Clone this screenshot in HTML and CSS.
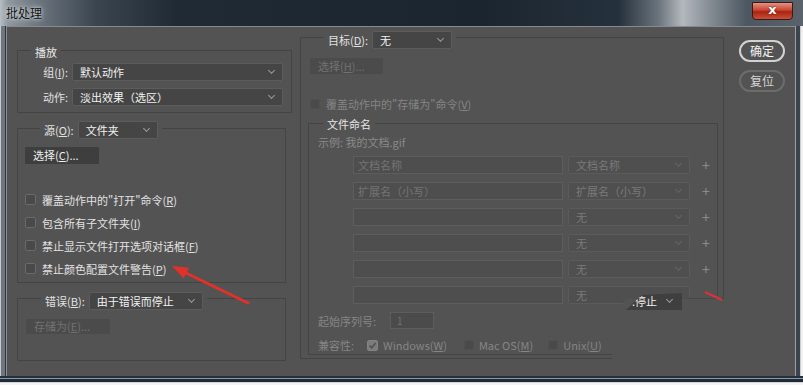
FILE: index.html
```html
<!DOCTYPE html>
<html lang="zh-CN">

<head>
  <meta charset="UTF-8">
  <title>批处理</title>
  <link rel="stylesheet" href="styles.css">
</head>

<body>
  <div class="window">
    <div class="titlebar">
      <div class="title">批处理</div>
      <div class="close">x</div>
    </div>

    <div class="body-row">
      <div class="frame-l"></div>

      <div class="client">
        <!-- 左侧：播放 / 源 / 错误 -->
        <div class="col-left">
          <div class="group play">
            <div class="group-head">播放</div>
            <div class="field-row">
              <label>组(<u>I</u>):</label>
              <div class="select wide"><span>默认动作</span><i class="chev"></i></div>
            </div>
            <div class="field-row">
              <label>动作:</label>
              <div class="select wide"><span>淡出效果（选区）</span><i class="chev"></i></div>
            </div>
          </div>

          <div class="group source">
            <div class="group-head">
              <label>源(<u>O</u>):</label>
              <div class="select short"><span>文件夹</span><i class="chev"></i></div>
            </div>
            <div class="btn-flat choose">选择(<u>C</u>)...</div>
            <div class="check-list">
              <div class="check-row"><span class="box"></span>覆盖动作中的"打开"命令(<u>R</u>)</div>
              <div class="check-row"><span class="box"></span>包含所有子文件夹(<u>I</u>)</div>
              <div class="check-row"><span class="box"></span>禁止显示文件打开选项对话框(<u>F</u>)</div>
              <div class="check-row"><span class="box"></span>禁止颜色配置文件警告(<u>P</u>)</div>
            </div>
          </div>

          <div class="group error">
            <div class="group-head">
              <label>错误(<u>B</u>):</label>
              <div class="select err-select"><span>由于错误而停止</span><i class="chev"></i></div>
            </div>
            <div class="btn-flat disabled save-as">存储为(<u>E</u>)...</div>
          </div>
        </div>

        <!-- 右侧：目标 -->
        <div class="col-right">
          <div class="group target">
            <div class="group-head">
              <label>目标(<u>D</u>):</label>
              <div class="select short"><span>无</span><i class="chev"></i></div>
            </div>
            <div class="btn-flat disabled choose-h">选择(<u>H</u>)...</div>
            <div class="check-row dim override"><span class="box off"></span>覆盖动作中的"存储为"命令(<u>V</u>)</div>

            <div class="group naming">
              <div class="group-head">文件命名</div>
              <div class="example">示例: 我的文档.gif</div>
              <div class="name-rows">
                <div class="name-row">
                  <div class="input"><span>文档名称</span></div>
                  <div class="select off name-select"><span>文档名称</span><i class="chev"></i></div>
                  <span class="plus">+</span>
                </div>
                <div class="name-row">
                  <div class="input"><span>扩展名（小写）</span></div>
                  <div class="select off name-select"><span>扩展名（小写）</span><i class="chev"></i></div>
                  <span class="plus">+</span>
                </div>
                <div class="name-row">
                  <div class="input"></div>
                  <div class="select off name-select"><span>无</span><i class="chev"></i></div>
                  <span class="plus">+</span>
                </div>
                <div class="name-row">
                  <div class="input"></div>
                  <div class="select off name-select"><span>无</span><i class="chev"></i></div>
                  <span class="plus">+</span>
                </div>
                <div class="name-row">
                  <div class="input"></div>
                  <div class="select off name-select"><span>无</span><i class="chev"></i></div>
                  <span class="plus">+</span>
                </div>
                <div class="name-row">
                  <div class="input"></div>
                  <div class="select off name-select"><span>无</span><i class="chev"></i></div>
                  <span class="plus"></span>
                </div>
              </div>

              <div class="serial-row dim">
                <label>起始序列号:</label>
                <div class="input serial"><span>1</span></div>
              </div>

              <div class="compat-row dim">
                <label>兼容性:</label>
                <span class="box off checked">
                  <svg width="9" height="9" viewBox="0 0 9 9"><path d="M1.5 4.5 L3.7 6.8 L7.6 2" fill="none" stroke="#505050" stroke-width="1.6"/></svg>
                </span>
                <span class="opt">Windows(<u>W</u>)</span>
                <span class="box off gap-mac"></span>
                <span class="opt">Mac OS(<u>M</u>)</span>
                <span class="box off gap-unix"></span>
                <span class="opt">Unix(<u>U</u>)</span>
              </div>
            </div>
          </div>
        </div>

        <div class="col-buttons">
          <div class="pill primary">确定</div>
          <div class="pill">复位</div>
        </div>
      </div>

      <div class="frame-r"></div>
    </div>

    <div class="frame-b"></div>

    <!-- 截图上的遮挡与标注 -->
    <div class="patch"></div>
    <div class="patch-edge"></div>
    <div class="fragment"><span>.停止</span><i class="chev"></i></div>
    <svg class="arrow" width="95" height="55" viewBox="0 0 95 55">
      <line x1="24" y1="17" x2="88" y2="48" stroke="#e3302b" stroke-width="3" stroke-linecap="round"/>
      <polygon points="12,11 23.7,23.5 29.1,12.7" fill="#e3302b"/>
    </svg>
    <svg class="arrow-tail" width="24" height="14" viewBox="0 0 24 14">
      <line x1="3" y1="3" x2="20" y2="11" stroke="#e0303a" stroke-width="2"/>
    </svg>
  </div>
</body>

</html>
```

FILE: styles.css
```css
* {
  margin: 0;
  padding: 0;
  box-sizing: border-box;
}

body {
  font-family: "Noto Sans CJK SC", "Noto Sans", sans-serif;
  font-size: 11px;
  color: #e2e2e2;
  background: #f4f4f4;
}

u {
  text-decoration: underline;
  text-underline-offset: 1px;
}

.window {
  position: relative;
  width: 803px;
  height: 385px;
  display: flex;
  flex-direction: column;
  overflow: hidden;
}

/* 标题栏 */
.titlebar {
  height: 26px;
  display: flex;
  justify-content: space-between;
  align-items: flex-start;
  padding: 0 10px 0 6px;
  background: linear-gradient(90deg, #b8bec4 0, #8e969e 1%, #6a737c 5%, #3a4550 12%, #1f2a35 22%, #1b2530 60%, #25313c 77%, #6b747d 82%, #b3b8bd 85%, #7d858d 89%, #4d5761 93%, #5a636c 100%);
}

.title {
  padding-top: 4px;
  font-size: 12px;
  color: #111;
  text-shadow: 0 0 6px rgba(230, 235, 240, 0.9), 0 0 3px rgba(230, 235, 240, 0.8);
}

.close {
  width: 41px;
  height: 18px;
  margin-top: 2px;
  border: 1px solid #3b1a14;
  border-radius: 0 0 4px 4px;
  background: linear-gradient(#e39386, #c9442f 45%, #a82410 55%, #c8503a);
  color: #fff;
  font-family: "DejaVu Sans", sans-serif;
  font-weight: bold;
  font-size: 13px;
  line-height: 14px;
  text-align: center;
  text-shadow: 0 0 2px #5a1208;
}

.body-row {
  display: flex;
  height: 350px;
}

.frame-l {
  width: 7px;
  background: linear-gradient(90deg, #c7ccd1 0 1px, #6f767d 1px 5px, #2c3540 5px 6px, #8a8f94 6px 7px);
}

.frame-r {
  width: 8px;
  background: linear-gradient(90deg, #9aa0a6 0 1px, #3a444e 1px 5px, #c9ced3 5px 6px, #f0f0f0 6px);
}

.frame-b {
  height: 9px;
  background: linear-gradient(180deg, #25303c 0 2px, #8e98a2 2px 3px, #1f2a36 3px 6px, #cfd5da 6px 7px, #f4f4f4 7px);
}

.client {
  width: 788px;
  display: flex;
  padding-left: 10px;
  background: #535353;
  border-top: 1px solid #8a8a8a;
}

/* 分组框 */
.group {
  border: 1px solid #444;
}

.group-head {
  display: flex;
  align-items: center;
  gap: 4px;
  width: fit-content;
  padding: 0 4px;
  background: #535353;
  white-space: nowrap;
}

.select {
  position: relative;
  height: 18px;
  line-height: 16px;
  padding-left: 7px;
  background: #454545;
  border: 1px solid #5c5c5c;
  border-radius: 2px;
  color: #f2f2f2;
  white-space: nowrap;
}

.chev {
  position: absolute;
  right: 8px;
  top: 4px;
  width: 5px;
  height: 5px;
  border-right: 1px solid #9a9a9a;
  border-bottom: 1px solid #9a9a9a;
  transform: rotate(45deg);
}

.select.off {
  background: #4f4f4f;
  border-color: #5b5b5b;
  color: #7a7a7a;
}

.select.off .chev {
  border-color: #666;
}

.input {
  height: 18px;
  line-height: 16px;
  padding-left: 4px;
  background: #4e4e4e;
  border: 1px solid #5d5d5d;
  color: #747474;
  white-space: nowrap;
}

.btn-flat {
  height: 17px;
  line-height: 17px;
  padding-left: 8px;
  background: #3e3e3e;
  color: #eee;
  white-space: nowrap;
}

.btn-flat.disabled {
  background: #4b4b4b;
  color: #727272;
}

.box {
  display: inline-flex;
  align-items: center;
  justify-content: center;
  width: 11px;
  height: 11px;
  margin-right: 6px;
  background: #494949;
  border: 1px solid #6a6a6a;
  border-radius: 2px;
  flex-shrink: 0;
}

.box.off {
  width: 10px;
  height: 10px;
  background: #4a4a4a;
  border-color: #4f4f4f;
}

.box.checked {
  width: 11px;
  height: 11px;
  background: #7c7c7c;
  border-color: #838383;
}

.check-row {
  display: flex;
  align-items: center;
  height: 23px;
  padding-left: 7px;
  white-space: nowrap;
}

.dim {
  color: #858585;
}

/* 左列 */
.col-left {
  width: 275px;
  display: flex;
  flex-direction: column;
}

.play {
  margin-top: 23px;
  padding: 0 0 6px 0;
}

.play .group-head {
  height: 16px;
  margin: -7px 0 0 13px;
  color: #eaeaea;
}

.field-row {
  display: flex;
  align-items: center;
  height: 18px;
  margin-top: 7px;
}

.play .group-head + .field-row {
  margin-top: 3px;
}

.field-row label {
  width: 54px;
  padding-right: 4px;
  text-align: right;
}

.select.wide {
  width: 211px;
}

.select.short {
  width: 80px;
}

.source {
  width: 269px;
  margin-top: 15px;
  padding-bottom: 2px;
}

.source .group-head {
  height: 19px;
  margin: -9px 0 0 22px;
}

.choose {
  width: 74px;
  margin: 8px 0 0 7px;
}

.check-list {
  margin-top: 24px;
}

.error {
  width: 269px;
  margin-top: 15px;
  padding-bottom: 26px;
}

.error .group-head {
  height: 18px;
  margin: -7px 0 0 23px;
}

.err-select {
  width: 114px;
}

.save-as {
  width: 84px;
  height: 15px;
  line-height: 15px;
  margin: 9px 0 0 8px;
}

/* 右列 */
.col-right {
  width: 424px;
  margin-left: 8px;
}

.target {
  margin-top: 10px;
  padding-bottom: 3px;
}

.target > .group-head {
  height: 18px;
  margin: -7px 0 0 23px;
}

.choose-h {
  width: 73px;
  height: 16px;
  line-height: 16px;
  margin: 9px 0 0 9px;
}

.override {
  height: 16px;
  margin-top: 22px;
  padding-left: 9px;
}

.override .box {
  margin-right: 6px;
}

.naming {
  margin: 11px 5px 0 7px;
  padding-bottom: 1px;
}

.naming .group-head {
  height: 16px;
  margin: -8px 0 0 14px;
  color: #e6e6e6;
}

.example {
  height: 16px;
  line-height: 16px;
  margin-top: 2px;
  padding-left: 9px;
  color: #8a8a8a;
}

.name-rows {
  margin-top: 6px;
  padding-left: 44px;
}

.name-row {
  display: flex;
  align-items: center;
  gap: 5px;
  height: 18px;
  margin-bottom: 8px;
}

.name-row .input {
  width: 210px;
}

.name-select {
  width: 122px;
}

.plus {
  width: 10px;
  margin-left: 6px;
  color: #8a8a8a;
  font-size: 14px;
  text-align: center;
}

.serial-row {
  display: flex;
  align-items: center;
  height: 17px;
  margin-top: 3px;
  padding-left: 9px;
}

.serial-row label {
  width: 72px;
}

.input.serial {
  width: 44px;
  height: 17px;
  padding-left: 6px;
  background: #4b4b4b;
  font-size: 10px;
}

.compat-row {
  display: flex;
  align-items: center;
  height: 16px;
  margin-top: 8px;
  padding-left: 9px;
  white-space: nowrap;
}

.compat-row label {
  width: 49px;
}

.compat-row .box {
  margin-right: 5px;
}

.gap-mac {
  margin-left: 17px;
}

.gap-unix {
  margin-left: 15px;
}

/* 按钮列 */
.col-buttons {
  width: 46px;
  margin-left: 15px;
}

.pill {
  height: 22px;
  margin-top: 8px;
  line-height: 18px;
  border: 2px solid #6c6c6c;
  border-radius: 12px;
  color: #d6d6d6;
  font-size: 12px;
  text-align: center;
}

.pill.primary {
  margin-top: 13px;
  border-color: #d2d2d2;
  color: #f4f4f4;
}

/* 截图中的覆盖层 */
.patch {
  position: absolute;
  left: 612px;
  top: 299px;
  width: 146px;
  height: 61px;
  background: #535353;
  clip-path: polygon(14px 0, 100% 0, 100% 100%, 0 100%, 0 22px);
}

.patch-edge {
  position: absolute;
  left: 687px;
  top: 298px;
  width: 37px;
  height: 1px;
  background: #474747;
}

.fragment {
  position: absolute;
  left: 626px;
  top: 293px;
  width: 56px;
  height: 17px;
  padding-left: 6px;
  line-height: 17px;
  background: #3f3f3f;
  color: #f0f0f0;
  clip-path: polygon(0 100%, 16px 2px, 100% 0, 100% 100%);
}

.fragment .chev {
  right: 10px;
}

.arrow {
  position: absolute;
  left: 160px;
  top: 255px;
}

.arrow-tail {
  position: absolute;
  left: 702px;
  top: 289px;
}
```
